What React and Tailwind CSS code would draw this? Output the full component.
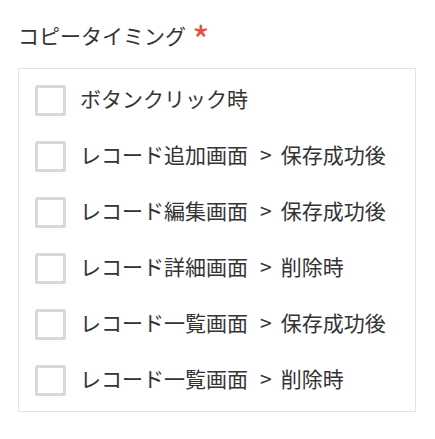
import React from "react";

const timings = [
  "ボタンクリック時",
  "レコード追加画面 > 保存成功後",
  "レコード編集画面 > 保存成功後",
  "レコード詳細画面 > 削除時",
  "レコード一覧画面 > 保存成功後",
  "レコード一覧画面 > 削除時",
];

// " > " gets wider spacing than the CJK font gives it
const TimingLabel = ({ text }) => {
  const parts = text.split(" > ");
  if (parts.length === 1) return <span>{text}</span>;
  return (
    <span className="flex items-center">
      <span>{parts[0]}</span>
      <span className="ml-[12px] mr-[9px]">&gt;</span>
      <span>{parts[1]}</span>
    </span>
  );
};

const App = () => {
  return (
    <div
      className="w-[435px] h-[439px] bg-white px-[18px] pt-[20px] text-[#333333]"
      style={{ fontFamily: '"Noto Sans CJK JP", "Noto Sans", sans-serif' }}
    >
      {/* Label */}
      <div className="flex items-center h-[30px] text-[21px] leading-[30px]">
        <span>コピータイミング</span>
        <span className="ml-[6px] text-[38px] text-[#e74c3c] leading-[30px] mt-[8px]">*</span>
      </div>

      {/* Options */}
      <div className="mt-[18px] w-[398px] border border-[#e3e3e3] pt-[3px] pb-[3px]">
        {timings.map((label) => (
          <label key={label} className="flex items-center h-[56px] pl-[16px] cursor-pointer">
            <span className="w-[31px] h-[31px] border-[3px] border-[#d9d9d9] rounded-[2px] bg-white shrink-0" />
            <span className="ml-[14px] mb-[4px] text-[21px] leading-[30px]">
              <TimingLabel text={label} />
            </span>
          </label>
        ))}
      </div>
    </div>
  );
};

export default App;
